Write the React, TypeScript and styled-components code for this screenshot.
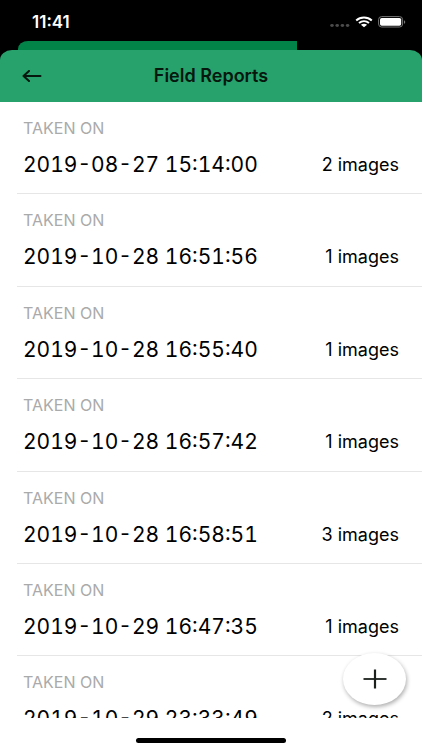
import React from 'react';
import styled, { createGlobalStyle } from 'styled-components';

const GlobalStyle = createGlobalStyle`
  *, *::before, *::after { box-sizing: border-box; }
  body { margin: 0; background: #fff; }
  button { font: inherit; color: inherit; border: 0; padding: 0; cursor: pointer; }
`;

const Screen = styled.div`
  position: relative;
  display: flex;
  flex-direction: column;
  height: 100vh;
  overflow: hidden;
  background: #fff;
  color: #000;
  font-family: Inter, 'Liberation Sans', sans-serif;
`;

const Backdrop = styled.div`
  flex: none;
  background: #000;
`;

const StatusBar = styled.div`
  display: flex;
  align-items: center;
  justify-content: space-between;
  height: 41px;
  padding: 2px 16px 0 32px;
  color: #fff;
`;

const Clock = styled.time`
  font-size: 17px;
  line-height: 20px;
  font-weight: 600;
`;

const StatusIcons = styled.div`
  display: flex;
  align-items: center;
  gap: 5px;
`;

const BackCard = styled.div`
  width: 66%;
  height: 9px;
  margin-left: 18px;
  border-top-left-radius: 10px 8px;
  background: #028348;
`;

const Header = styled.header`
  display: grid;
  grid-template-columns: 44px 1fr 44px;
  align-items: center;
  height: 52px;
  padding: 0 10px;
  border-radius: 12px 12px 0 0 / 10px 10px 0 0;
  background: #27a26c;
  color: #06170e;
`;

const BackButton = styled.button`
  display: grid;
  place-items: center;
  height: 44px;
  background: none;
`;

const Title = styled.h1`
  margin: 0;
  text-align: center;
  font-size: 18px;
  line-height: 20px;
  font-weight: 600;
`;

const ReportList = styled.ul`
  flex: 1;
  min-height: 0;
  display: grid;
  grid-auto-rows: 15%;
  margin: 0;
  padding: 0 0 0 17px;
  overflow: hidden;
  list-style: none;
`;

const ReportRow = styled.li`
  display: flex;
  flex-direction: column;
  gap: 13px;
  padding: 16px 23px 0 6px;
  border-bottom: 1px solid #e6e6e6;
`;

const Label = styled.span`
  color: #aaa;
  font-size: 16px;
  line-height: 20px;
`;

const Details = styled.div`
  display: flex;
  align-items: center;
  justify-content: space-between;
  line-height: 28px;
  white-space: nowrap;
`;

const TakenAt = styled.time`
  font-size: 21px;
  font-variant-numeric: tabular-nums;
`;

const ImageCount = styled.span`
  font-size: 18px;
`;

const HomeArea = styled.footer`
  flex: none;
  display: flex;
  justify-content: center;
  height: 32px;
  padding-top: 20px;
  background: #fff;
`;

const HomeIndicator = styled.div`
  width: 150px;
  height: 5px;
  border-radius: 3px;
  background: #000;
`;

const AddButton = styled.button`
  position: absolute;
  right: 16px;
  bottom: 45px;
  display: grid;
  place-items: center;
  width: 63px;
  height: 52px;
  border-radius: 50%;
  background: #fff;
  box-shadow: 1px 2px 4px rgba(0, 0, 0, 0.32);
`;

const reports = [
  { takenAt: '2019-08-27 15:14:00', images: 2 },
  { takenAt: '2019-10-28 16:51:56', images: 1 },
  { takenAt: '2019-10-28 16:55:40', images: 1 },
  { takenAt: '2019-10-28 16:57:42', images: 1 },
  { takenAt: '2019-10-28 16:58:51', images: 3 },
  { takenAt: '2019-10-29 16:47:35', images: 1 },
  { takenAt: '2019-10-29 23:33:49', images: 2 },
];

const SignalIcon = () => (
  <svg width="20" height="12" viewBox="0 0 20 12" fill="#4b4b4b" aria-hidden="true">
    <ellipse cx="2" cy="9.5" rx="1.8" ry="1.4" />
    <ellipse cx="7.2" cy="9.5" rx="1.8" ry="1.4" />
    <ellipse cx="12.4" cy="9.5" rx="1.8" ry="1.4" />
    <ellipse cx="17.6" cy="9.5" rx="1.8" ry="1.4" />
  </svg>
);

const WifiIcon = () => (
  <svg width="18" height="12" viewBox="0 0 18 12" aria-hidden="true">
    <g fill="none" stroke="#fff" strokeWidth="2">
      <path d="M1.2 4.4C5.5.6 12.5.6 16.8 4.4" />
      <path d="M4 7.1C6.9 4.7 11.1 4.7 14 7.1" />
    </g>
    <path d="M5.9 8.7C7.7 7.3 10.3 7.3 12.1 8.7L9 11.3Z" fill="#fff" />
  </svg>
);

const BatteryIcon = () => (
  <svg width="28" height="12" viewBox="0 0 28 12" aria-hidden="true">
    <rect x="0.6" y="0.6" width="24" height="10.4" rx="3" fill="none" stroke="#777" />
    <rect x="2" y="1.9" width="21.2" height="7.8" rx="1.7" fill="#fff" />
    <path d="M26 4.2C27.7 4.7 27.7 7.3 26 7.8Z" fill="#777" />
  </svg>
);

const ArrowIcon = () => (
  <svg width="20" height="12" viewBox="0 0 20 12" fill="none" stroke="currentColor" strokeWidth="2" strokeLinecap="round" strokeLinejoin="round" aria-hidden="true">
    <path d="M18.5 6H1.5M7 1L1.5 6L7 11" />
  </svg>
);

const PlusIcon = () => (
  <svg width="24" height="20" viewBox="0 0 24 20" fill="none" stroke="#1c211e" aria-hidden="true">
    <path d="M0.5 10H23.5" strokeWidth="1.8" />
    <path d="M12 0.5V19.5" strokeWidth="2.2" />
  </svg>
);

export default function App() {
  return (
    <Screen>
      <GlobalStyle />
      <Backdrop>
        <StatusBar>
          <Clock>11:41</Clock>
          <StatusIcons>
            <SignalIcon />
            <WifiIcon />
            <BatteryIcon />
          </StatusIcons>
        </StatusBar>
        <BackCard />
        <Header>
          <BackButton type="button" aria-label="Back">
            <ArrowIcon />
          </BackButton>
          <Title>Field Reports</Title>
        </Header>
      </Backdrop>
      <ReportList>
        {reports.map((report) => (
          <ReportRow key={report.takenAt}>
            <Label>TAKEN ON</Label>
            <Details>
              <TakenAt>{report.takenAt}</TakenAt>
              <ImageCount>{report.images} images</ImageCount>
            </Details>
          </ReportRow>
        ))}
      </ReportList>
      <HomeArea>
        <HomeIndicator />
      </HomeArea>
      <AddButton type="button" aria-label="Add report">
        <PlusIcon />
      </AddButton>
    </Screen>
  );
}
